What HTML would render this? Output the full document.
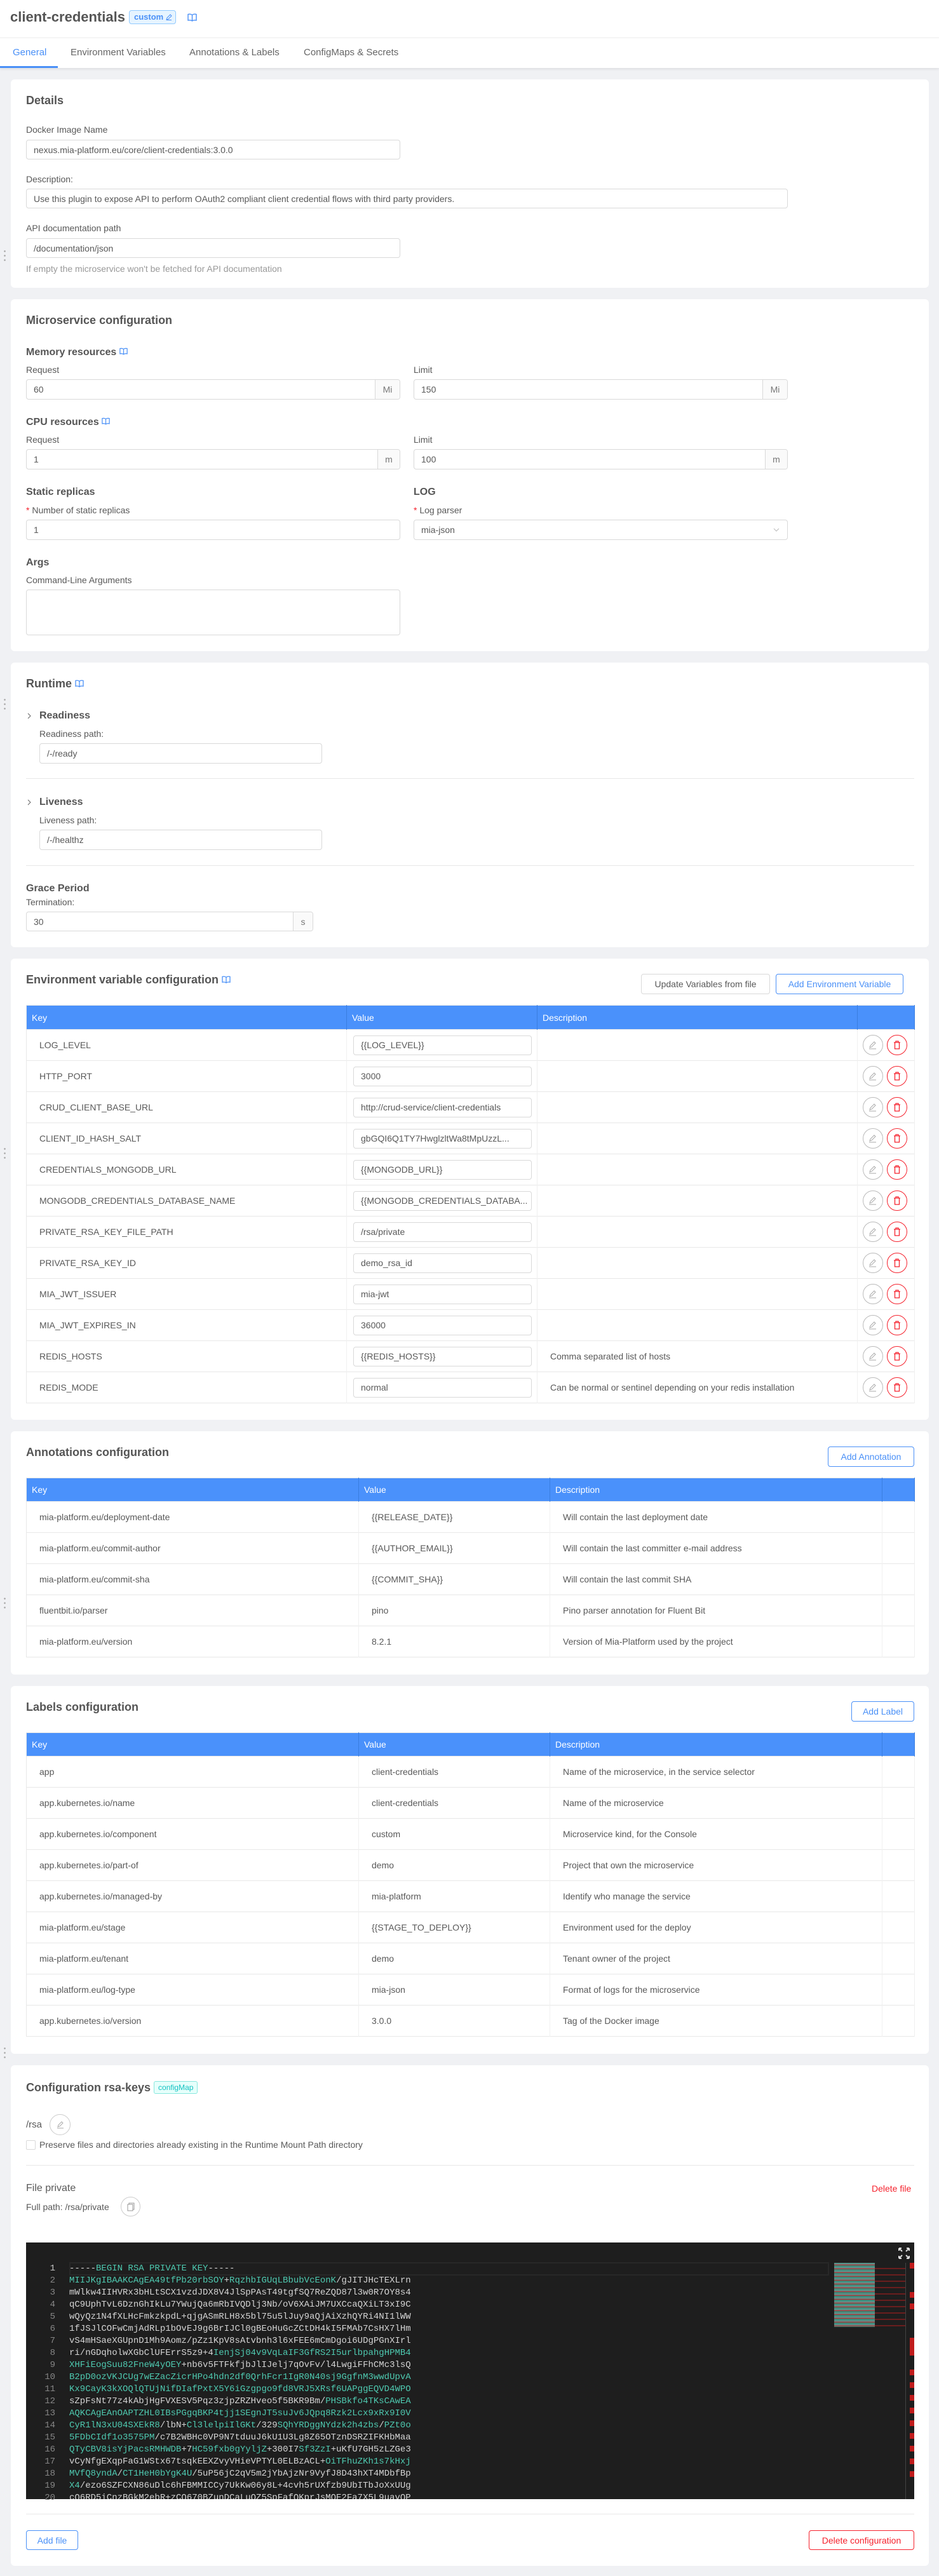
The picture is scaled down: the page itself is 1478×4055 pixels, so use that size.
<!DOCTYPE html>
<html><head><meta charset="utf-8">
<style>
*{box-sizing:border-box;margin:0;padding:0}
body{width:1478px;height:4055px;background:#f0f1f4;font-family:"Liberation Sans",sans-serif;color:#595959;font-size:14px;position:relative;overflow:hidden}
.a{position:absolute}
.t{position:absolute;line-height:20px;white-space:nowrap}
.card{position:absolute;left:17px;width:1445px;background:#fff;border-radius:6px}
.h{position:absolute;left:41px;font-size:18px;font-weight:bold;color:#555;line-height:24px;white-space:nowrap}
.sh{position:absolute;font-size:16px;font-weight:bold;color:#555;line-height:22px;white-space:nowrap}
.inp{position:absolute;border:1px solid #d9d9d9;border-radius:4px;background:#fff;padding-left:11px;font-size:14px;color:#595959;display:flex;align-items:center;white-space:nowrap;overflow:hidden}
.sfx{position:absolute;right:0;top:0;bottom:0;border-left:1px solid #d9d9d9;background:#fafafa;display:flex;align-items:center;justify-content:center;color:#777}
.hr{position:absolute;left:41px;width:1398px;height:1px;background:#e8e8e8}
.btn{position:absolute;border:1px solid #d9d9d9;border-radius:4px;background:#fff;display:flex;align-items:center;justify-content:center;font-size:14px;white-space:nowrap}
.bb{border-color:#4a90f7;color:#4a90f7}
.br{border-color:#f5222d;color:#f5222d}
table{position:absolute;left:41px;border-collapse:collapse;table-layout:fixed;border:1px solid #e8e8e8}
th{background:#4a91fb;color:#fff;font-weight:normal;text-align:left;padding-left:8px;font-size:14px;border-right:1px solid #3a7ee0}
td{border-top:1px solid #e8e8e8;border-right:1px solid #f0f0f0;padding-left:20px;font-size:14px;color:#595959;white-space:nowrap}
td .v{border:1px solid #d9d9d9;border-radius:4px;height:31px;width:281px;margin-left:-10px;padding-left:11px;display:flex;align-items:center;overflow:hidden}
.ic{display:inline-block;width:32px;height:32px;border-radius:50%;border:1px solid #bbb;vertical-align:middle;position:relative}
.ic.r{border-color:#f5222d;margin-left:6px}
.ic svg{position:absolute;left:8px;top:8px}
.dots{position:absolute;left:6px;width:3px;height:20px;background:radial-gradient(circle,#aaa 1.2px,transparent 1.5px) 0 0/3px 7px repeat-y}
.code{position:absolute;left:109px;top:3562px;font-family:"Liberation Mono",monospace;font-size:14px;line-height:19px;color:#d4d4d4;white-space:pre}
.g{color:#4ec9b0}
.ln{position:absolute;left:41px;top:3562px;width:46px;text-align:right;font-family:"Liberation Mono",monospace;font-size:14px;line-height:19px;color:#858585;white-space:pre}
</style></head><body>

<!-- header -->
<div class="a" style="left:0;top:0;width:1478px;height:107px;background:#fff;box-shadow:0 2px 4px rgba(0,0,0,.08)"></div>
<div class="a" style="left:0;top:59px;width:1478px;height:1px;background:#ececec"></div>
<div class="t" style="left:16px;top:14px;font-size:22px;line-height:26px;font-weight:bold;color:#555">client-credentials</div>
<div class="a" style="left:203px;top:16px;width:74px;height:22px;border:1px solid #91caff;background:#e6f4ff;border-radius:4px;color:#4a90f7;font-size:13px;font-weight:bold;line-height:20px;padding-left:7px">custom <svg width="10" height="10" viewBox="0 0 10 10" style="vertical-align:-1px"><path d="M1 9L2 6L7 1L9 3L4 8Z M1 9.5H9" stroke="#4a90f7" fill="none" stroke-width="1"/></svg></div>
<svg class="a" style="left:295px;top:21px" width="15" height="13" viewBox="0 0 15 13"><path d="M1 1.5C3 1 5.5 1 7.5 2.5C9.5 1 12 1 14 1.5V11C12 10.5 9.5 10.5 7.5 12C5.5 10.5 3 10.5 1 11Z M7.5 2.5V12" stroke="#4a90f7" fill="none" stroke-width="1.4"/></svg>
<div class="t" style="left:20px;top:73px;font-size:15px;color:#4a90f7">General</div>
<div class="t" style="left:111px;top:73px;font-size:15px;color:#666">Environment Variables</div>
<div class="t" style="left:298px;top:73px;font-size:15px;color:#666">Annotations &amp; Labels</div>
<div class="t" style="left:478px;top:73px;font-size:15px;color:#666">ConfigMaps &amp; Secrets</div>
<div class="a" style="left:0;top:104px;width:91px;height:3px;background:#4a90f7"></div>

<div class="dots" style="top:392px"></div>
<div class="dots" style="top:1098px"></div>
<div class="dots" style="top:1805px"></div>
<div class="dots" style="top:2513px"></div>
<div class="dots" style="top:3221px"></div>

<!-- Details -->
<div class="card" style="top:125px;height:328px"></div>
<div class="h" style="top:146px">Details</div>
<div class="t" style="left:41px;top:194px">Docker Image Name</div>
<div class="inp" style="left:41px;top:220px;width:589px;height:31px">nexus.mia-platform.eu/core/client-credentials:3.0.0</div>
<div class="t" style="left:41px;top:272px">Description:</div>
<div class="inp" style="left:41px;top:297px;width:1199px;height:31px">Use this plugin to expose API to perform OAuth2 compliant client credential flows with third party providers.</div>
<div class="t" style="left:41px;top:349px">API documentation path</div>
<div class="inp" style="left:41px;top:375px;width:589px;height:31px">/documentation/json</div>
<div class="t" style="left:41px;top:413px;color:#999">If empty the microservice won't be fetched for API documentation</div>

<!-- Microservice -->
<div class="card" style="top:471px;height:554px"></div>
<div class="h" style="top:492px">Microservice configuration</div>
<div class="sh" style="left:41px;top:544px">Memory resources <svg width="13" height="12" viewBox="0 0 15 13"><path d="M1 1.5C3 1 5.5 1 7.5 2.5C9.5 1 12 1 14 1.5V11C12 10.5 9.5 10.5 7.5 12C5.5 10.5 3 10.5 1 11Z M7.5 2.5V12" stroke="#4a90f7" fill="none" stroke-width="1.4"/></svg></div>
<div class="t" style="left:41px;top:572px">Request</div>
<div class="t" style="left:651px;top:572px">Limit</div>
<div class="inp" style="left:41px;top:597px;width:589px;height:32px">60<div class="sfx" style="width:39px">Mi</div></div>
<div class="inp" style="left:651px;top:597px;width:589px;height:32px">150<div class="sfx" style="width:39px">Mi</div></div>
<div class="sh" style="left:41px;top:654px">CPU resources <svg width="13" height="12" viewBox="0 0 15 13"><path d="M1 1.5C3 1 5.5 1 7.5 2.5C9.5 1 12 1 14 1.5V11C12 10.5 9.5 10.5 7.5 12C5.5 10.5 3 10.5 1 11Z M7.5 2.5V12" stroke="#4a90f7" fill="none" stroke-width="1.4"/></svg></div>
<div class="t" style="left:41px;top:682px">Request</div>
<div class="t" style="left:651px;top:682px">Limit</div>
<div class="inp" style="left:41px;top:707px;width:589px;height:32px">1<div class="sfx" style="width:35px">m</div></div>
<div class="inp" style="left:651px;top:707px;width:589px;height:32px">100<div class="sfx" style="width:35px">m</div></div>
<div class="sh" style="left:41px;top:764px">Static replicas</div>
<div class="sh" style="left:651px;top:764px">LOG</div>
<div class="t" style="left:41px;top:793px"><span style="color:#f5222d">*</span> Number of static replicas</div>
<div class="t" style="left:651px;top:793px"><span style="color:#f5222d">*</span> Log parser</div>
<div class="inp" style="left:41px;top:818px;width:589px;height:32px">1</div>
<div class="inp" style="left:651px;top:818px;width:589px;height:32px">mia-json<svg class="a" style="right:12px;top:12px" width="10" height="7" viewBox="0 0 10 7"><path d="M1 1L5 5L9 1" stroke="#bbb" fill="none"/></svg></div>
<div class="sh" style="left:41px;top:875px">Args</div>
<div class="t" style="left:41px;top:903px">Command-Line Arguments</div>
<div class="inp" style="left:41px;top:928px;width:589px;height:72px"></div>

<!-- Runtime -->
<div class="card" style="top:1043px;height:448px"></div>
<div class="h" style="top:1064px">Runtime <svg width="14" height="12" viewBox="0 0 15 13"><path d="M1 1.5C3 1 5.5 1 7.5 2.5C9.5 1 12 1 14 1.5V11C12 10.5 9.5 10.5 7.5 12C5.5 10.5 3 10.5 1 11Z M7.5 2.5V12" stroke="#4a90f7" fill="none" stroke-width="1.4"/></svg></div>
<svg class="a" style="left:43px;top:1122px" width="6" height="10" viewBox="0 0 6 10"><path d="M1 1L5 5L1 9" stroke="#666" fill="none"/></svg>
<div class="sh" style="left:62px;top:1116px">Readiness</div>
<div class="t" style="left:62px;top:1145px">Readiness path:</div>
<div class="inp" style="left:62px;top:1170px;width:445px;height:32px">/-/ready</div>
<div class="hr" style="top:1225px"></div>
<svg class="a" style="left:43px;top:1258px" width="6" height="10" viewBox="0 0 6 10"><path d="M1 1L5 5L1 9" stroke="#666" fill="none"/></svg>
<div class="sh" style="left:62px;top:1252px">Liveness</div>
<div class="t" style="left:62px;top:1281px">Liveness path:</div>
<div class="inp" style="left:62px;top:1306px;width:445px;height:32px">/-/healthz</div>
<div class="hr" style="top:1362px"></div>
<div class="sh" style="left:41px;top:1388px">Grace Period</div>
<div class="t" style="left:41px;top:1410px">Termination:</div>
<div class="inp" style="left:41px;top:1435px;width:452px;height:31px">30<div class="sfx" style="width:31px">s</div></div>

<!-- Env -->
<div class="card" style="top:1509px;height:726px"></div>
<div class="h" style="top:1530px">Environment variable configuration <svg width="14" height="12" viewBox="0 0 15 13"><path d="M1 1.5C3 1 5.5 1 7.5 2.5C9.5 1 12 1 14 1.5V11C12 10.5 9.5 10.5 7.5 12C5.5 10.5 3 10.5 1 11Z M7.5 2.5V12" stroke="#4a90f7" fill="none" stroke-width="1.4"/></svg></div>
<div class="btn" style="left:1009px;top:1533px;width:203px;height:32px;color:#595959">Update Variables from file</div>
<div class="btn bb" style="left:1221px;top:1533px;width:201px;height:32px">Add Environment Variable</div>
<table style="top:1582px;width:1398px">
<colgroup><col style="width:504px"><col style="width:300px"><col style="width:504px"><col style="width:90px"></colgroup>
<tr style="height:38px"><th>Key</th><th>Value</th><th>Description</th><th></th></tr>
<tr style="height:49px"><td>LOG_LEVEL</td><td><div class="v">{{LOG_LEVEL}}</div></td><td></td><td class="x"></td></tr>
<tr style="height:49px"><td>HTTP_PORT</td><td><div class="v">3000</div></td><td></td><td class="x"></td></tr>
<tr style="height:49px"><td>CRUD_CLIENT_BASE_URL</td><td><div class="v">http://crud-service/client-credentials</div></td><td></td><td class="x"></td></tr>
<tr style="height:49px"><td>CLIENT_ID_HASH_SALT</td><td><div class="v">gbGQI6Q1TY7HwglzltWa8tMpUzzL...</div></td><td></td><td class="x"></td></tr>
<tr style="height:49px"><td>CREDENTIALS_MONGODB_URL</td><td><div class="v">{{MONGODB_URL}}</div></td><td></td><td class="x"></td></tr>
<tr style="height:49px"><td>MONGODB_CREDENTIALS_DATABASE_NAME</td><td><div class="v">{{MONGODB_CREDENTIALS_DATABA...</div></td><td></td><td class="x"></td></tr>
<tr style="height:49px"><td>PRIVATE_RSA_KEY_FILE_PATH</td><td><div class="v">/rsa/private</div></td><td></td><td class="x"></td></tr>
<tr style="height:49px"><td>PRIVATE_RSA_KEY_ID</td><td><div class="v">demo_rsa_id</div></td><td></td><td class="x"></td></tr>
<tr style="height:49px"><td>MIA_JWT_ISSUER</td><td><div class="v">mia-jwt</div></td><td></td><td class="x"></td></tr>
<tr style="height:49px"><td>MIA_JWT_EXPIRES_IN</td><td><div class="v">36000</div></td><td></td><td class="x"></td></tr>
<tr style="height:49px"><td>REDIS_HOSTS</td><td><div class="v">{{REDIS_HOSTS}}</div></td><td>Comma separated list of hosts</td><td class="x"></td></tr>
<tr style="height:49px"><td>REDIS_MODE</td><td><div class="v">normal</div></td><td>Can be normal or sentinel depending on your redis installation</td><td class="x"></td></tr>
</table>

<!-- Annotations -->
<div class="card" style="top:2253px;height:383px"></div>
<div class="h" style="top:2274px">Annotations configuration</div>
<div class="btn bb" style="left:1303px;top:2277px;width:136px;height:32px">Add Annotation</div>
<table style="top:2326px;width:1398px">
<colgroup><col style="width:523px"><col style="width:301px"><col style="width:523px"><col style="width:51px"></colgroup>
<tr style="height:37px"><th>Key</th><th>Value</th><th>Description</th><th></th></tr>
<tr style="height:49px"><td>mia-platform.eu/deployment-date</td><td>{{RELEASE_DATE}}</td><td>Will contain the last deployment date</td><td></td></tr>
<tr style="height:49px"><td>mia-platform.eu/commit-author</td><td>{{AUTHOR_EMAIL}}</td><td>Will contain the last committer e-mail address</td><td></td></tr>
<tr style="height:49px"><td>mia-platform.eu/commit-sha</td><td>{{COMMIT_SHA}}</td><td>Will contain the last commit SHA</td><td></td></tr>
<tr style="height:49px"><td>fluentbit.io/parser</td><td>pino</td><td>Pino parser annotation for Fluent Bit</td><td></td></tr>
<tr style="height:49px"><td>mia-platform.eu/version</td><td>8.2.1</td><td>Version of Mia-Platform used by the project</td><td></td></tr>
</table>

<!-- Labels -->
<div class="card" style="top:2654px;height:579px"></div>
<div class="h" style="top:2675px">Labels configuration</div>
<div class="btn bb" style="left:1340px;top:2678px;width:99px;height:32px">Add Label</div>
<table style="top:2727px;width:1398px">
<colgroup><col style="width:523px"><col style="width:301px"><col style="width:523px"><col style="width:51px"></colgroup>
<tr style="height:37px"><th>Key</th><th>Value</th><th>Description</th><th></th></tr>
<tr style="height:49px"><td>app</td><td>client-credentials</td><td>Name of the microservice, in the service selector</td><td></td></tr>
<tr style="height:49px"><td>app.kubernetes.io/name</td><td>client-credentials</td><td>Name of the microservice</td><td></td></tr>
<tr style="height:49px"><td>app.kubernetes.io/component</td><td>custom</td><td>Microservice kind, for the Console</td><td></td></tr>
<tr style="height:49px"><td>app.kubernetes.io/part-of</td><td>demo</td><td>Project that own the microservice</td><td></td></tr>
<tr style="height:49px"><td>app.kubernetes.io/managed-by</td><td>mia-platform</td><td>Identify who manage the service</td><td></td></tr>
<tr style="height:49px"><td>mia-platform.eu/stage</td><td>{{STAGE_TO_DEPLOY}}</td><td>Environment used for the deploy</td><td></td></tr>
<tr style="height:49px"><td>mia-platform.eu/tenant</td><td>demo</td><td>Tenant owner of the project</td><td></td></tr>
<tr style="height:49px"><td>mia-platform.eu/log-type</td><td>mia-json</td><td>Format of logs for the microservice</td><td></td></tr>
<tr style="height:49px"><td>app.kubernetes.io/version</td><td>3.0.0</td><td>Tag of the Docker image</td><td></td></tr>
</table>

<!-- Config -->
<div class="card" style="top:3251px;height:788px"></div>
<div class="h" style="top:3274px">Configuration rsa-keys <span style="display:inline-block;vertical-align:2px;border:1px solid #87e8de;background:#e6fffb;color:#13c2c2;font-size:12px;font-weight:normal;line-height:18px;padding:0 6px;border-radius:3px">configMap</span></div>
<div class="t" style="left:41px;top:3335px;font-size:15px">/rsa</div>
<div class="a" style="left:78px;top:3328px;width:33px;height:33px;border:1px solid #ccc;border-radius:50%"><svg class="a" style="left:10px;top:9px" width="12" height="13" viewBox="0 0 12 13"><path d="M2 10L3 7L8 2L10 4L5 9Z M1 12H11" stroke="#aaa" fill="none"/></svg></div>
<div class="a" style="left:41px;top:3369px;width:15px;height:15px;border:1px solid #d9d9d9;border-radius:2px"></div>
<div class="t" style="left:62px;top:3366px">Preserve files and directories already existing in the Runtime Mount Path directory</div>
<div class="hr" style="top:3408px"></div>
<div class="t" style="left:41px;top:3435px;font-size:16px">File private</div>
<div class="t" style="left:1372px;top:3435px;color:#f5222d">Delete file</div>
<div class="t" style="left:41px;top:3464px">Full path: /rsa/private</div>
<div class="a" style="left:190px;top:3458px;width:31px;height:31px;border:1px solid #ccc;border-radius:50%"><svg class="a" style="left:9px;top:8px" width="12" height="14" viewBox="0 0 12 14"><path d="M3 3V1H11V11H9 M1 3H9V13H1Z" stroke="#999" fill="none"/></svg></div>

<div class="a" style="left:41px;top:3530px;width:1398px;height:404px;background:#1e1e1e;overflow:hidden">
  <div class="a" style="left:68px;top:31px;width:1196px;height:21px;border:2px solid #282828"></div>
  <svg class="a" style="left:1372px;top:7px" width="20" height="20" viewBox="0 0 20 20"><path d="M2 2L7 7M2 2H6M2 2V6 M18 2L13 7M18 2H14M18 2V6 M2 18L7 13M2 18H6M2 18V14 M18 18L13 13M18 18H14M18 18V14" stroke="#ddd" stroke-width="2" fill="none"/></svg>
  <div class="a" style="left:1272px;top:32px;width:64px;height:101px;background:repeating-linear-gradient(180deg,#5a8f86 0 2px,#777 2px 3px,#b03030 3px 4px,#3a8a7a 4px 6px)"></div>
  <div class="a" style="left:1336px;top:32px;width:48px;height:101px;background:repeating-linear-gradient(180deg,transparent 0 8px,#6a1e1e 8px 10px)"></div>
  <div class="a" style="left:1384px;top:32px;width:1px;height:372px;background:#444"></div>
  <div class="a" style="left:1391px;top:32px;width:7px;height:9px;background:#c11c1c"></div>
  <div class="a" style="left:1391px;top:78px;width:7px;height:9px;background:#c11c1c"></div>
  <div class="a" style="left:1391px;top:96px;width:7px;height:9px;background:#c11c1c"></div>
  <div class="a" style="left:1391px;top:150px;width:7px;height:28px;background:#c11c1c"></div>
  <div class="a" style="left:1391px;top:200px;width:7px;height:180px;background:repeating-linear-gradient(180deg,#c11c1c 0 9px,transparent 9px 20px)"></div>
</div>
<div class="ln"><span style="color:#c6c6c6">1</span>
2
3
4
5
6
7
8
9
10
11
12
13
14
15
16
17
18
19
20</div>
<div class="a" style="left:41px;top:3530px;width:1270px;height:404px;overflow:hidden;pointer-events:none"><div class="code" style="left:68px;top:32px">-----<span class="g">BEGIN RSA PRIVATE KEY</span>-----
<span class="g">MIIJKgIBAAKCAgEA49tfPb20rbSOY</span>+<span class="g">RqzhbIGUqLBbubVcEonK</span>/gJITJHcTEXLrn
mWlkw4IIHVRx3bHLtSCX1vzdJDX8V4JlSpPAsT49tgfSQ7ReZQD87l3w0R7OY8s4
qC9UphTvL6DznGhIkLu7YWujQa6mRbIVQDlj3Nb/oV6XAiJM7UXCcaQXiLT3xI9C
wQyQz1N4fXLHcFmkzkpdL+qjgASmRLH8x5bl75u5lJuy9aQjAiXzhQYRi4NI1lWW
1fJSJlCOFwCmjAdRLp1bOvEJ9g6BrIJCl0gBEoHuGcZCtDH4kI5FMAb7CsHX7lHm
vS4mHSaeXGUpnD1Mh9Aomz/pZz1KpV8sAtvbnh3l6xFEE6mCmDgoi6UDgPGnXIrl
ri/nGDqholwXGbClUFErrS5z9+4<span class="g">IenjSj04v9VqLaIF3GfRS2I5urlbpahgHPMB4</span>
<span class="g">XHFiEogSuu82FneW4yOEY</span>+nb6v5FTFkfjbJlIJelj7qOvFv/l4LwgiFFhCMc3lsQ
<span class="g">B2pD0ozVKJCUg7wEZacZicrHPo4hdn2df0QrhFcr1IgR0N40sj9GgfnM3wwdUpvA</span>
<span class="g">Kx9CayK3kXOQlQTUjNifDIafPxtX5Y6iGzgpgo9fd8VRJ5XRsf6UAPggEQVD4WPO</span>
sZpFsNt77z4kAbjHgFVXESV5Pqz3zjpZRZHveo5f5BKR9Bm/<span class="g">PHSBkfo4TKsCAwEA</span>
<span class="g">AQKCAgEAnOAPTZHL0IBsPGgqBKP4tjj1SEgnJT5suJv6JQpq8Rzk2Lcx9xRx9I0V</span>
<span class="g">CyR1lN3xU04SXEkR8</span>/lbN+<span class="g">Cl3lelpiIlGKt</span>/329<span class="g">SQhYRDggNYdzk2h4zbs</span>/<span class="g">PZt0o</span>
<span class="g">5FDbCIdf1o3575PM</span>/c7B2WBHc0VP9N7tduuJ6kU1U3Lg8Z65OTznDSRZIFKHbMaa
<span class="g">QTyCBV8isYjPacsRMHWDB</span>+7<span class="g">HC59fxb0gYyljZ</span>+300I7<span class="g">Sf3ZzI</span>+uKfU7GH5zLZGe3
vCyNfgEXqpFaG1WStx67tsqkEEXZvyVHieVPTYL0ELBzACL+<span class="g">OiTFhuZKh1s7kHxj</span>
<span class="g">MVfQ8yndA</span>/<span class="g">CT1HeH0bYgK4U</span>/5uP56jC2qV5m2jYbAjzNr9VyfJ8D43hXT4MDbfBp
<span class="g">X4</span>/ezo6SZFCXN86uDlc6hFBMMICCy7UkKw06y8L+4cvh5rUXfzb9UbITbJoXxUUg
cQ6RD5iCnzBGkM2ebR+zCQ670BZunDCaLuQZ5SpFafQKprJsMQE2Fa7X5L9uavQP</div></div>
<div class="hr" style="top:3957px"></div>
<div class="btn bb" style="left:41px;top:3983px;width:82px;height:31px">Add file</div>
<div class="btn br" style="left:1273px;top:3983px;width:166px;height:31px">Delete configuration</div>

<script>
document.querySelectorAll('td.x').forEach(function(td){
td.style.paddingLeft='8px';
td.innerHTML='<span class="ic"><svg width="14" height="14" viewBox="0 0 14 14"><path d="M2 11L3 8L9 2L11 4L5 10Z M1 13H12" stroke="#aaa" fill="none"/></svg></span><span class="ic r"><svg width="14" height="14" viewBox="0 0 14 14"><path d="M2 3H12 M5 3V1H9V3 M3.5 3V13H10.5V3" stroke="#f5222d" fill="none" stroke-width="1.3"/></svg></span>';
});
</script>
</body></html>
